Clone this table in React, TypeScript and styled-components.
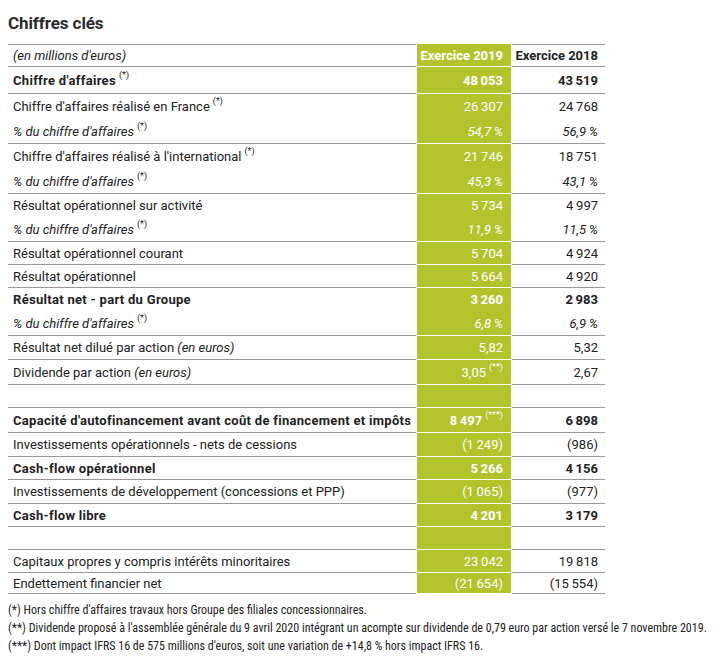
import React from "react";
import styled, { createGlobalStyle, css } from "styled-components";

const Global = createGlobalStyle`
  html, body { margin: 0; padding: 0; background: #fff; }
  body { font-family: Roboto, "Liberation Sans", sans-serif; color: #222; }
`;

const GREEN = "#b4c32c";
const LINE = "#9c939b";

const Page = styled.div`
  padding: 12px 8px 0 8px;
`;

const Title = styled.h1`
  margin: 0 0 10px 0;
  font-size: 17px;
  line-height: 22px;
  font-weight: 700;
  color: #2b2b2b;
  letter-spacing: -0.1px;
`;

const Table = styled.div`
  width: 597px;
  display: flex;
  flex-direction: column;
`;

const Row = styled.div<{ $border: boolean; $top?: boolean; $h: number }>`
  display: grid;
  grid-template-columns: 408px 94px 93px;
  column-gap: 1px;
  height: ${(p) => p.$h}px;
  font-size: 13px;
  ${(p) =>
    p.$border &&
    css`
      & > div:nth-child(1),
      & > div:nth-child(3) {
        border-bottom: 1px solid ${LINE};
      }
      & > div:nth-child(2) {
        border-bottom: 1px solid #fff;
      }
    `}
  ${(p) =>
    p.$top &&
    css`
      & > div:nth-child(1),
      & > div:nth-child(3) {
        border-top: 1px solid ${LINE};
      }
    `}
`;

const Cell = styled.div<{ $bold?: boolean; $italic?: boolean }>`
  display: flex;
  align-items: center;
  box-sizing: border-box;
  white-space: nowrap;
  font-weight: ${(p) => (p.$bold ? 700 : 400)};
  font-style: ${(p) => (p.$italic ? "italic" : "normal")};
`;

const Label = styled(Cell)`
  padding-left: 5px;
  color: #222;
  letter-spacing: ${(p) => (p.$bold ? "0.3px" : "0")};
`;

const Val19 = styled(Cell)`
  justify-content: flex-end;
  padding-right: 8px;
  background: ${GREEN};
  color: #fff;
`;

const Val18 = styled(Cell)`
  justify-content: flex-end;
  padding-right: 7px;
  color: #222;
`;

const Text = styled.span``;

const Sup = styled.sup`
  font-size: 9px;
  font-style: normal;
  font-weight: 400;
  letter-spacing: 0;
  margin-left: 3px;
  position: relative;
  top: -2px;
  vertical-align: top;
  line-height: 1;
`;

const It = styled.span`
  font-style: italic;
`;

const Notes = styled.div`
  margin-top: 7px;
  font-family: "Liberation Sans Narrow", "Roboto Condensed", "DejaVu Sans Condensed", sans-serif;
  font-size: 12px;
  line-height: 18px;
  color: #222;
`;

const Note = styled.p`
  margin: 0;
`;

type R = {
  label: React.ReactNode;
  sup?: string;
  v19?: string;
  v19sup?: string;
  v18?: string;
  bold?: boolean;
  italic?: boolean;
  h?: number;
};

const n = (s: string) => s.replace(/ /g, "\u2009");

const groups: R[][] = [
  [{ label: "Chiffre d'affaires", sup: "(*)", v19: "48 053", v18: "43 519", bold: true, h: 27 }],
  [
    { label: "Chiffre d'affaires réalisé en France", sup: "(*)", v19: "26 307", v18: "24 768" },
    { label: "% du chiffre d'affaires", sup: "(*)", v19: "54,7 %", v18: "56,9 %", italic: true },
  ],
  [
    { label: "Chiffre d'affaires réalisé à l'international", sup: "(*)", v19: "21 746", v18: "18 751" },
    { label: "% du chiffre d'affaires", sup: "(*)", v19: "45,3 %", v18: "43,1 %", italic: true },
  ],
  [
    { label: "Résultat opérationnel sur activité", v19: "5 734", v18: "4 997" },
    { label: "% du chiffre d'affaires", sup: "(*)", v19: "11,9 %", v18: "11,5 %", italic: true },
  ],
  [{ label: "Résultat opérationnel courant", v19: "5 704", v18: "4 924" }],
  [{ label: "Résultat opérationnel", v19: "5 664", v18: "4 920" }],
  [
    { label: "Résultat net - part du Groupe", v19: "3 260", v18: "2 983", bold: true },
    { label: "% du chiffre d'affaires", sup: "(*)", v19: "6,8 %", v18: "6,9 %", italic: true },
  ],
  [{ label: <>Résultat net dilué par action <It>(en euros)</It></>, v19: "5,82", v18: "5,32", h: 24 }],
  [{ label: <>Dividende par action <It>(en euros)</It></>, v19: "3,05", v19sup: "(**)", v18: "2,67" }],
  [{ label: "" }],
  [
    {
      label: "Capacité d'autofinancement avant coût de financement et impôts",
      v19: "8 497",
      v19sup: "(***)",
      v18: "6 898",
      bold: true,
    },
  ],
  [{ label: "Investissements opérationnels - nets de cessions", v19: "(1 249)", v18: "(986)", h: 24 }],
  [{ label: "Cash-flow opérationnel", v19: "5 266", v18: "4 156", bold: true }],
  [{ label: "Investissements de développement (concessions et PPP)", v19: "(1 065)", v18: "(977)", h: 24 }],
  [{ label: "Cash-flow libre", v19: "4 201", v18: "3 179", bold: true }],
  [{ label: "" }],
  [{ label: "Capitaux propres y compris intérêts minoritaires", v19: "23 042", v18: "19 818" }],
  [{ label: "Endettement financier net", v19: "(21 654)", v18: "(15 554)", h: 21 }],
];

const rowHeight = (r: R) => r.h ?? (r.sup || r.v19sup ? 25 : 23);

export default function App() {
  return (
    <Page>
      <Global />
      <Title>Chiffres clés</Title>
      <Table>
        <Row $border $top $h={23}>
          <Label $italic>(en millions d'euros)</Label>
          <Val19 $bold>Exercice 2019</Val19>
          <Val18 $bold>Exercice 2018</Val18>
        </Row>
        {groups.map((g, gi) =>
          g.map((r, ri) => (
            <Row key={`${gi}-${ri}`} $border={ri === g.length - 1} $h={rowHeight(r)}>
              <Label $bold={r.bold} $italic={r.italic}>
                <Text>
                  {r.label}
                  {r.sup && <Sup>{r.sup}</Sup>}
                </Text>
              </Label>
              <Val19 $bold={r.bold} $italic={r.italic}>
                <Text>
                  {r.v19 ? n(r.v19) : ""}
                  {r.v19sup && <Sup>{r.v19sup}</Sup>}
                </Text>
              </Val19>
              <Val18 $bold={r.bold} $italic={r.italic}>
                <Text>{r.v18 ? n(r.v18) : ""}</Text>
              </Val18>
            </Row>
          ))
        )}
      </Table>
      <Notes>
        <Note>(*) Hors chiffre d'affaires travaux hors Groupe des filiales concessionnaires.</Note>
        <Note>
          (**) Dividende proposé à l'assemblée générale du 9 avril 2020 intégrant un acompte sur dividende de 0,79 euro
          par action versé le 7 novembre 2019.
        </Note>
        <Note>(***) Dont impact IFRS 16 de 575 millions d'euros, soit une variation de +14,8 % hors impact IFRS 16.</Note>
      </Notes>
    </Page>
  );
}
